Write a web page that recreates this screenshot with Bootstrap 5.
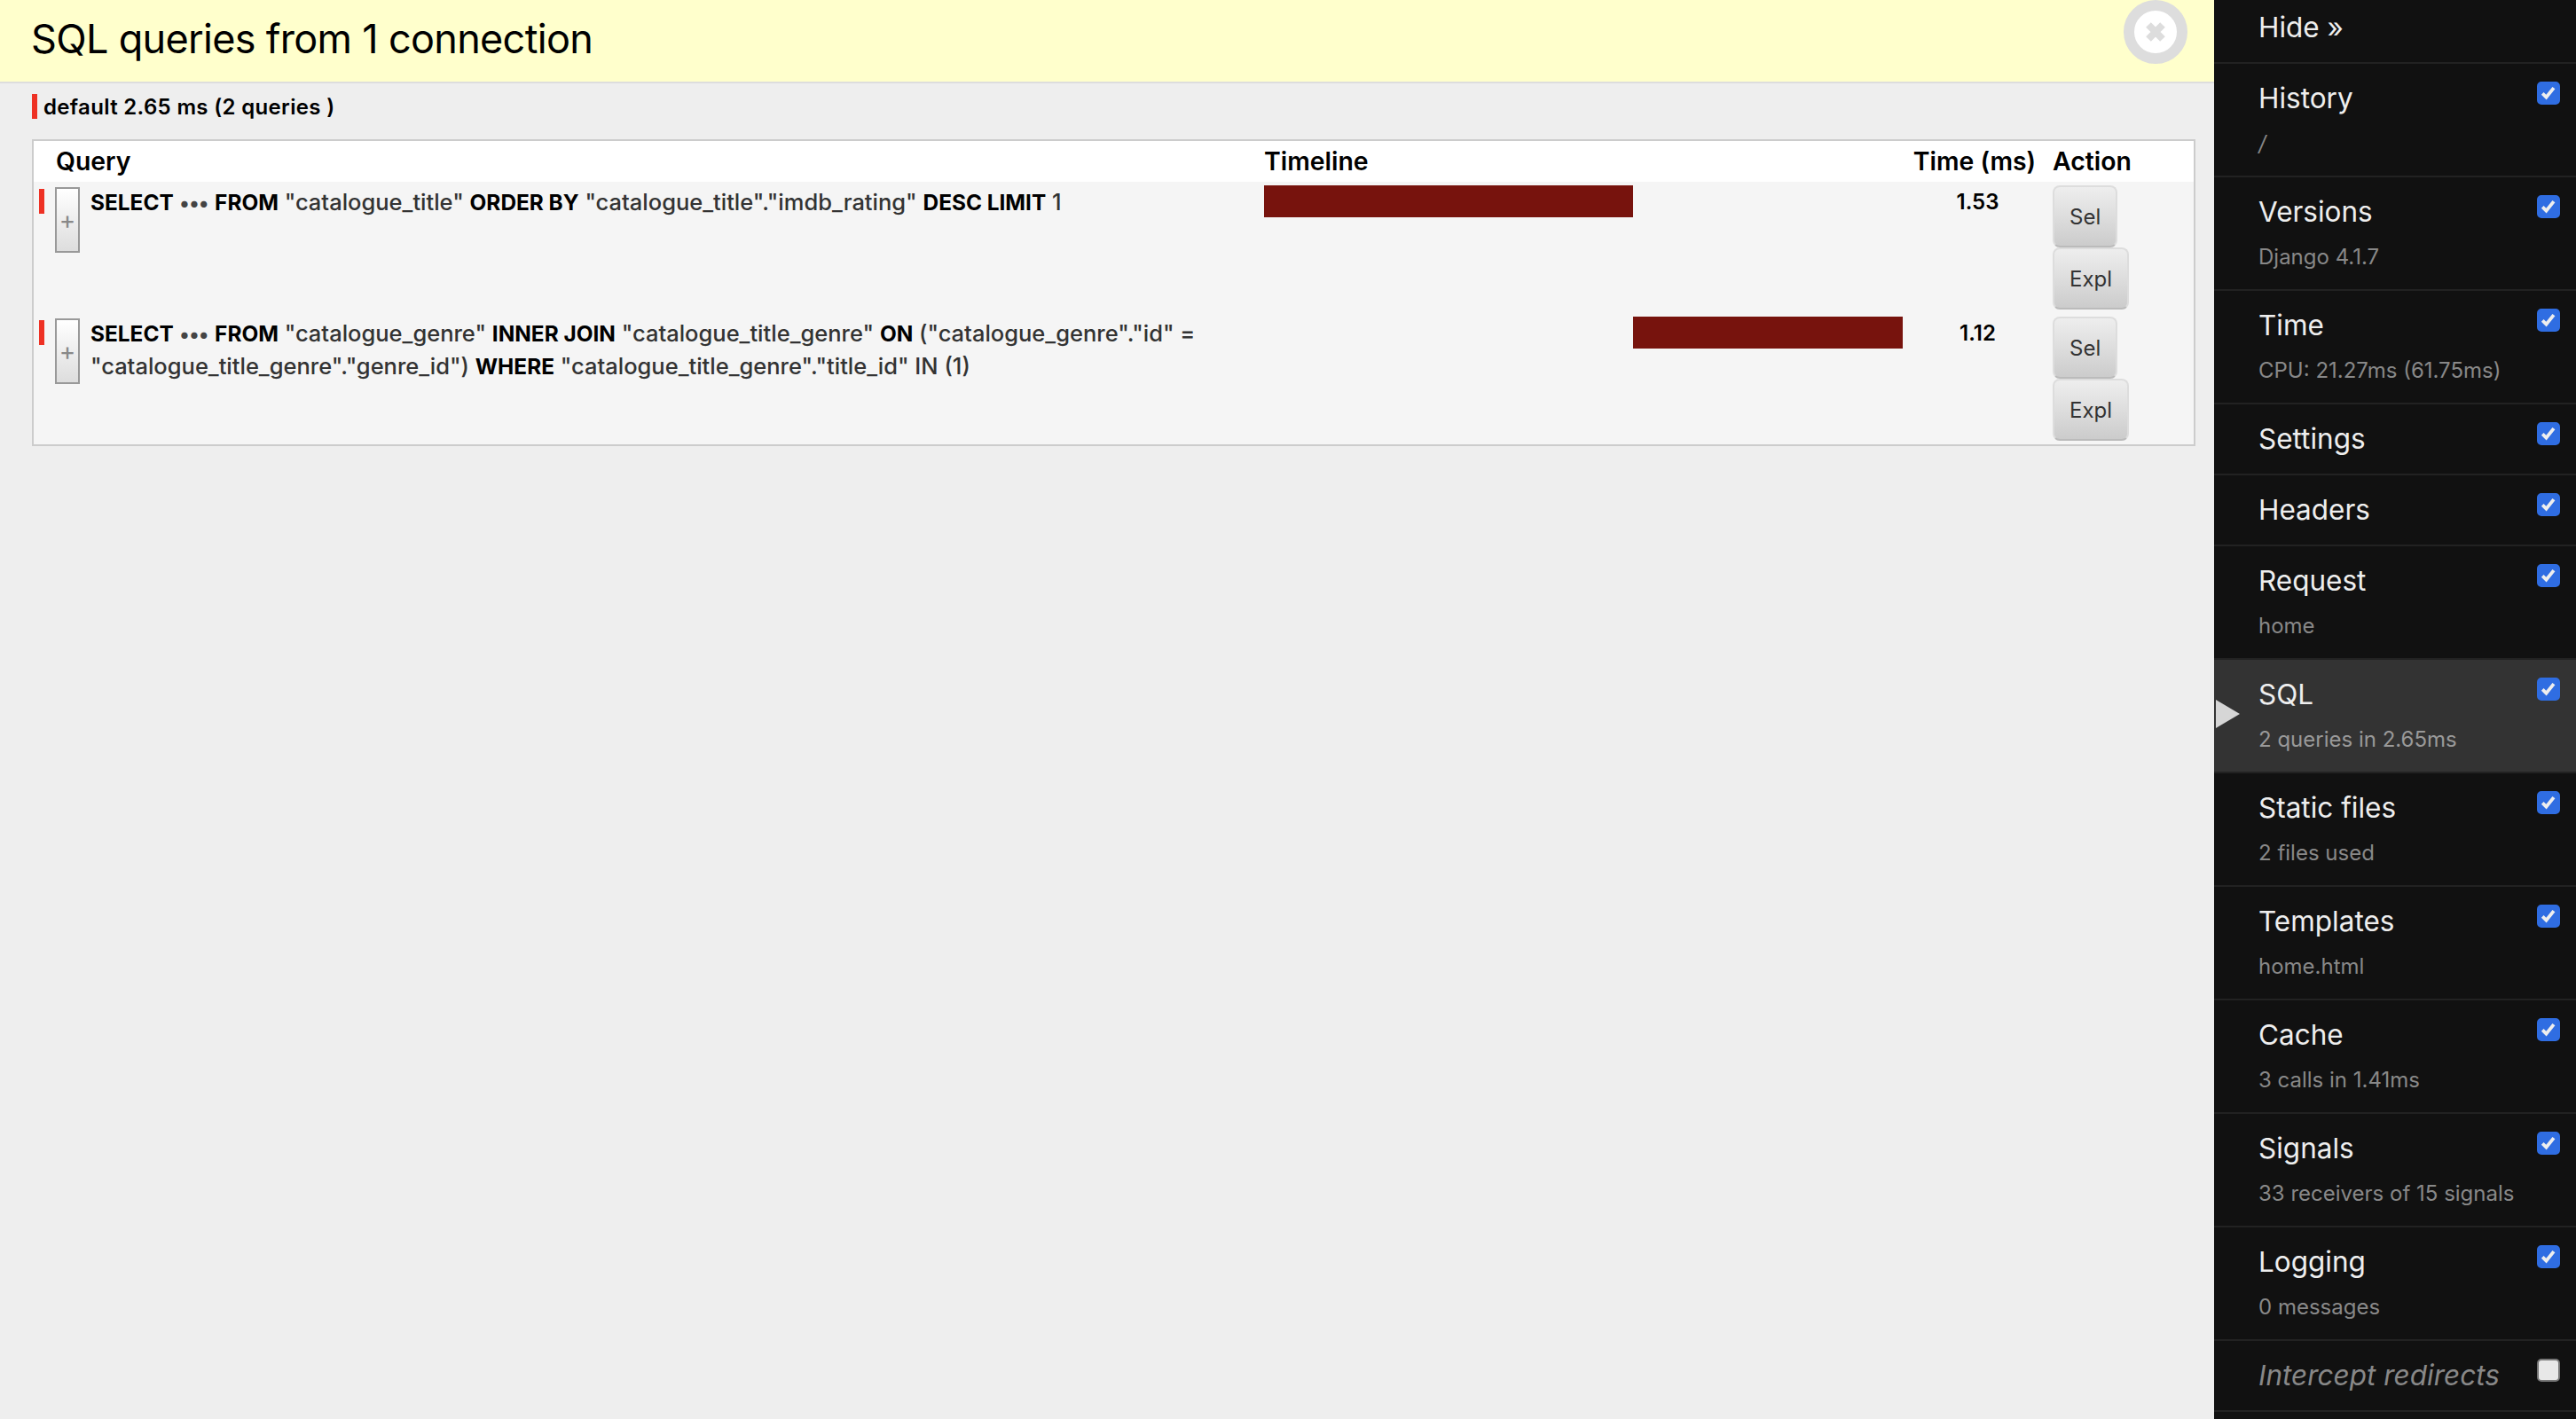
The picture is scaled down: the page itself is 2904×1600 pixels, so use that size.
<!DOCTYPE html>
<html lang="en">
<head>
<meta charset="utf-8">
<title>SQL queries</title>
<link href="https://cdn.jsdelivr.net/npm/bootstrap@5.3.0/dist/css/bootstrap.min.css" rel="stylesheet">
<style>
html,body{height:100%;}
body{font-family:Inter,"Liberation Sans",sans-serif;background:#eee;color:#000;overflow:hidden;}
.dj-shell{height:1600px;}
.dj-main{width:2496px;flex:none;}
.dj-head{height:94px;background:#ffc;border-bottom:2px solid #ddd;padding:0 30px 0 35px;}
.dj-head h3{font-size:45px;font-weight:400;line-height:87px;margin:0;letter-spacing:-.68px;}
.dj-close{width:72px;height:72px;display:block;}
.dj-conn{font-size:24px;font-weight:600;height:28px;line-height:28px;margin:12px 0 23px 36px;letter-spacing:.33px;}
.dj-conn span{padding-top:2px;}
.dj-conn i,.dj-rowmark{display:block;flex:none;width:6px;height:28px;background:#ee3124;}
.dj-conn i{margin-right:7px;}
.dj-table{width:2439px;margin-left:36px;border:2px solid #ccc;border-collapse:separate;border-spacing:0;table-layout:fixed;}
.dj-table th{background:#fff;font-size:28.4px;font-weight:600;line-height:32px;padding:7px 0;height:46px;}
.dj-table td{background:#f5f5f5;padding:4px;vertical-align:top;height:148px;font-size:24px;line-height:37px;color:#333;}
.dj-c1{width:1383px;}
.dj-c2{width:728px;}
.dj-c3{width:161px;}
.dj-qh{padding-left:25px!important;}
.dj-th2{padding-left:4px!important;}
.dj-thtime{padding-right:7px!important;}
.dj-table td.dj-query{font-size:25.5px;font-weight:500;}
.dj-query b{color:#000;font-weight:700;font-size:24.4px;line-height:1;}
.dj-query em{font-style:normal;letter-spacing:0;color:#444;font-weight:700;font-size:23px;line-height:1;}
.dj-rowmark{margin:4px 12px 0 2px;}
.dj-tog{flex:none;width:28px;height:74px;margin:2px 12px 0 0;padding:0;border:2px solid #999;border-radius:0;background:linear-gradient(#fff,#ddd);color:#888;font-size:28px;line-height:1;}
.dj-bartrack{height:36px;position:relative;}
.dj-bar{position:absolute;top:0;height:36px;background:#77130d;}
.dj-time{font-weight:600;color:#000!important;text-align:center;}
.dj-btn{display:block;width:fit-content;height:70px;padding:2px 17px 0;margin:0;border:2px solid #ddd;border-bottom-color:#bbb;border-radius:8px;background:linear-gradient(#eee,#ccc);color:#333;font-size:24px;line-height:64px;}
.dj-btn:hover{color:#333;background:linear-gradient(#eee,#ccc);border-color:#ddd;}
.dj-side{width:408px;flex:none;background:#111;position:relative;}
.dj-item{border-bottom:2px solid #222;padding:19px 18px 19px 50px;position:relative;}
.dj-item.dj-sub{height:128px;}
.dj-item.dj-plain{height:80px;}
.dj-item.dj-hide{height:72px;padding-top:11px;}
.dj-item.dj-on{background:#333;}
.dj-t{display:block;font-size:31.5px;line-height:40px;color:#eee;}
.dj-s{display:block;font-size:24px;line-height:32px;color:#888;margin-top:15px;}
.dj-on .dj-s{color:#999;}
.dj-t.dj-i{font-style:italic;color:#888;}
.dj-ck.form-check-input{position:absolute;right:18px;top:20px;width:26px;height:26px;margin:0;border-radius:5px;background-color:#e8e8e8;border:2px solid #777;}
.dj-ck.form-check-input:checked{background-color:#2f6de2;border-color:#2f6de2;background-size:100% 100%;background-image:url("data:image/svg+xml,%3Csvg xmlns='http://www.w3.org/2000/svg' viewBox='0 0 26 26'%3E%3Cpath d='M5 13.5l5 5 L20 6' fill='none' stroke='%23eee' stroke-width='4.5'/%3E%3C/svg%3E");}
.dj-arrow{position:absolute;left:2px;top:45px;width:0;height:0;border-style:solid;border-width:16px 0 16px 27px;border-color:transparent transparent transparent #d6d6d6;}
</style>
</head>
<body>
<div class="dj-shell d-flex">
  <main class="dj-main">
    <header class="dj-head d-flex justify-content-between align-items-start">
      <h3>SQL queries from 1 connection</h3>
      <svg class="dj-close" viewBox="0 0 72 72" aria-label="Close">
        <circle cx="36" cy="36" r="30" fill="#fff" stroke="#ddd" stroke-width="12"/>
        <path d="M28 28L44 44M44 28L28 44" stroke="#ddd" stroke-width="8"/>
      </svg>
    </header>
    <div class="dj-conn d-flex align-items-center"><i></i><span>default 2.65 ms (2 queries )</span></div>
    <table class="dj-table">
      <colgroup><col class="dj-c1"><col class="dj-c2"><col class="dj-c3"><col></colgroup>
      <thead>
        <tr><th class="dj-qh">Query</th><th class="dj-th2">Timeline</th><th class="text-center dj-thtime">Time (ms)</th><th class="dj-th2">Action</th></tr>
      </thead>
      <tbody>
        <tr>
          <td class="dj-query"><div class="d-flex">
            <span class="dj-rowmark"></span>
            <button class="btn dj-tog" type="button">+</button>
            <div><b>SELECT</b> <em>•••</em> <b>FROM</b> "catalogue_title" <b>ORDER BY</b> "catalogue_title"."imdb_rating" <b>DESC LIMIT</b> 1</div>
          </div></td>
          <td><div class="dj-bartrack"><div class="dj-bar" style="left:0;width:416px"></div></div></td>
          <td class="dj-time">1.53</td>
          <td><a class="btn dj-btn" href="#">Sel</a><a class="btn dj-btn" href="#">Expl</a></td>
        </tr>
        <tr>
          <td class="dj-query"><div class="d-flex">
            <span class="dj-rowmark"></span>
            <button class="btn dj-tog" type="button">+</button>
            <div><b>SELECT</b> <em>•••</em> <b>FROM</b> "catalogue_genre" <b>INNER JOIN</b> "catalogue_title_genre" <b>ON</b> ("catalogue_genre"."id" =<br>"catalogue_title_genre"."genre_id") <b>WHERE</b> "catalogue_title_genre"."title_id" IN (1)</div>
          </div></td>
          <td><div class="dj-bartrack"><div class="dj-bar" style="left:416px;width:304px"></div></div></td>
          <td class="dj-time">1.12</td>
          <td><a class="btn dj-btn" href="#">Sel</a><a class="btn dj-btn" href="#">Expl</a></td>
        </tr>
      </tbody>
    </table>
  </main>
  <aside class="dj-side">
    <ul class="list-unstyled mb-0">
      <li class="dj-item dj-hide"><span class="dj-t">Hide »</span></li>
      <li class="dj-item dj-sub"><input class="form-check-input dj-ck" type="checkbox" checked aria-label="History"><span class="dj-t">History</span><span class="dj-s fst-italic">/</span></li>
      <li class="dj-item dj-sub"><input class="form-check-input dj-ck" type="checkbox" checked aria-label="Versions"><span class="dj-t">Versions</span><span class="dj-s">Django 4.1.7</span></li>
      <li class="dj-item dj-sub"><input class="form-check-input dj-ck" type="checkbox" checked aria-label="Time"><span class="dj-t">Time</span><span class="dj-s">CPU: 21.27ms (61.75ms)</span></li>
      <li class="dj-item dj-plain"><input class="form-check-input dj-ck" type="checkbox" checked aria-label="Settings"><span class="dj-t">Settings</span></li>
      <li class="dj-item dj-plain"><input class="form-check-input dj-ck" type="checkbox" checked aria-label="Headers"><span class="dj-t">Headers</span></li>
      <li class="dj-item dj-sub"><input class="form-check-input dj-ck" type="checkbox" checked aria-label="Request"><span class="dj-t">Request</span><span class="dj-s">home</span></li>
      <li class="dj-item dj-sub dj-on"><span class="dj-arrow"></span><input class="form-check-input dj-ck" type="checkbox" checked aria-label="SQL"><span class="dj-t">SQL</span><span class="dj-s">2 queries in 2.65ms</span></li>
      <li class="dj-item dj-sub"><input class="form-check-input dj-ck" type="checkbox" checked aria-label="Static files"><span class="dj-t">Static files</span><span class="dj-s">2 files used</span></li>
      <li class="dj-item dj-sub"><input class="form-check-input dj-ck" type="checkbox" checked aria-label="Templates"><span class="dj-t">Templates</span><span class="dj-s">home.html</span></li>
      <li class="dj-item dj-sub"><input class="form-check-input dj-ck" type="checkbox" checked aria-label="Cache"><span class="dj-t">Cache</span><span class="dj-s">3 calls in 1.41ms</span></li>
      <li class="dj-item dj-sub"><input class="form-check-input dj-ck" type="checkbox" checked aria-label="Signals"><span class="dj-t">Signals</span><span class="dj-s">33 receivers of 15 signals</span></li>
      <li class="dj-item dj-sub"><input class="form-check-input dj-ck" type="checkbox" checked aria-label="Logging"><span class="dj-t">Logging</span><span class="dj-s">0 messages</span></li>
      <li class="dj-item dj-plain"><input class="form-check-input dj-ck" type="checkbox" aria-label="Intercept redirects"><span class="dj-t dj-i">Intercept redirects</span></li>
    </ul>
  </aside>
</div>
<script src="https://cdn.jsdelivr.net/npm/bootstrap@5.3.0/dist/js/bootstrap.bundle.min.js"></script>
</body>
</html>
